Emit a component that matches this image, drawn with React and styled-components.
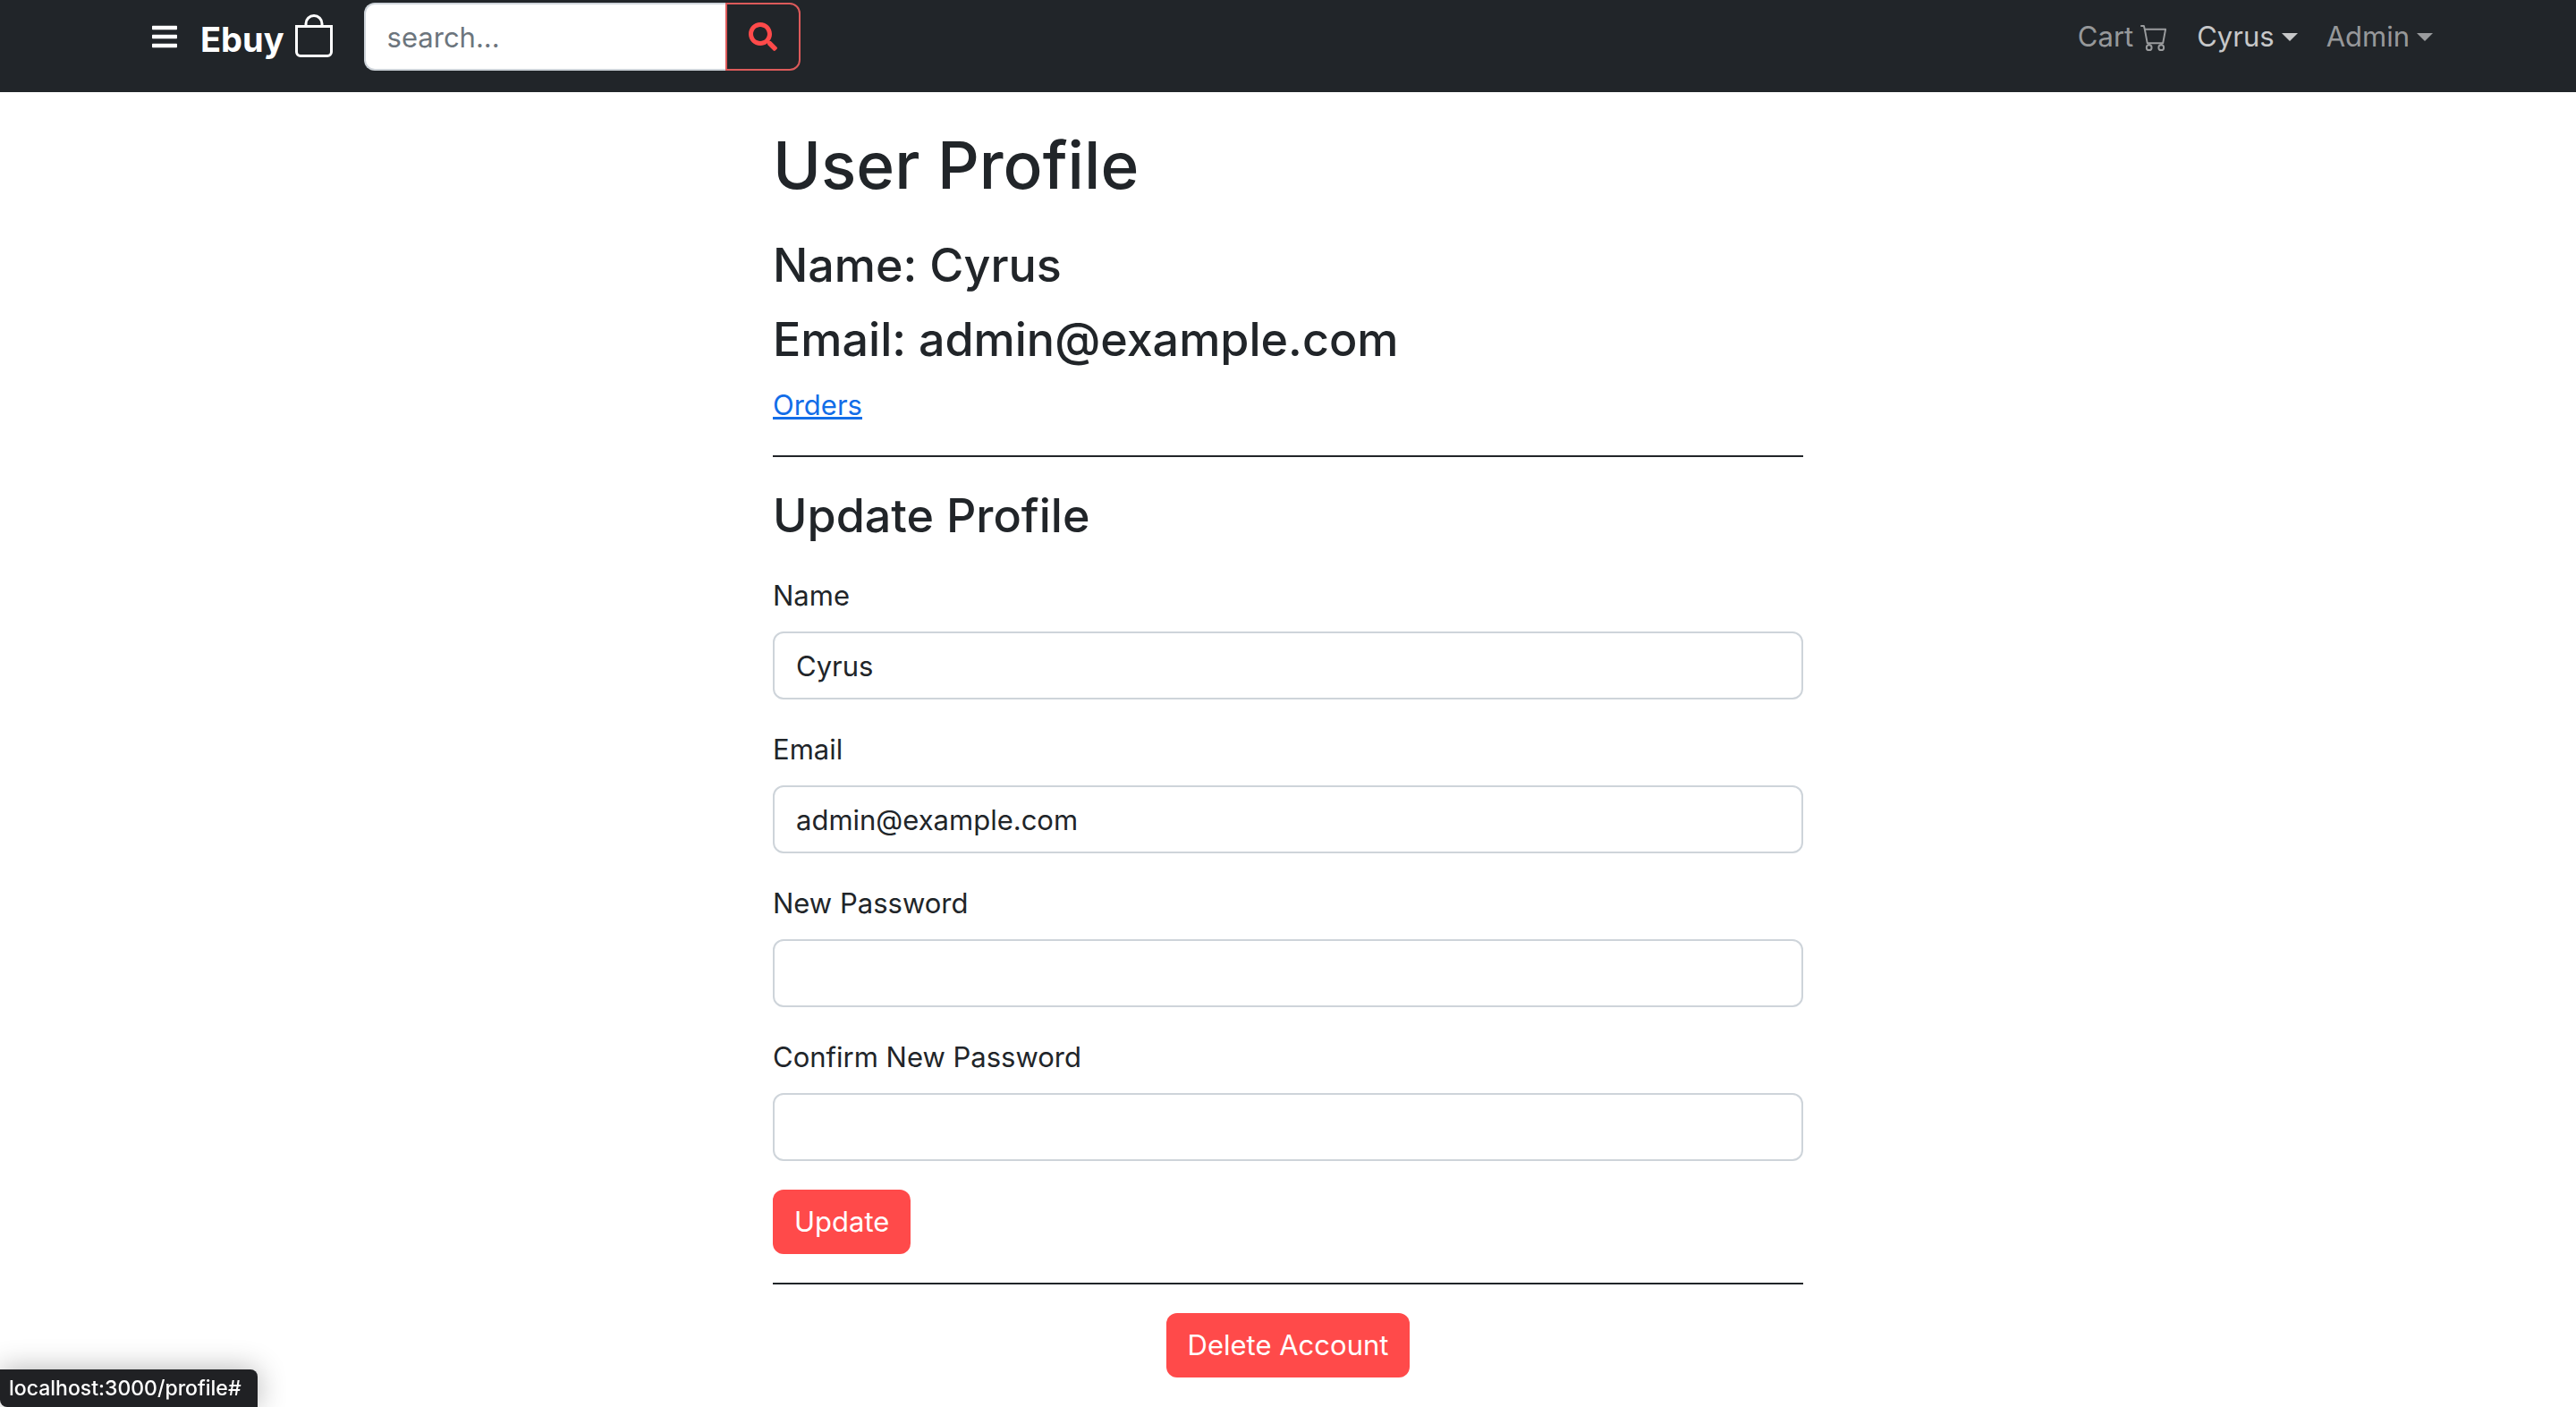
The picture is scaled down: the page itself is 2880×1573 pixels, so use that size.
import React, { useState } from "react";
import styled, { createGlobalStyle } from "styled-components";
import { FaBars, FaSearch } from "react-icons/fa";
import { BsBag, BsCart } from "react-icons/bs";

const GlobalStyle = createGlobalStyle`
  *, *::before, *::after { box-sizing: border-box; }
  body {
    margin: 0;
    background: #fff;
    color: #212529;
    font-family: Inter, "Liberation Sans", sans-serif;
    font-size: 31px;
    line-height: 48px;
  }
  button, input { font: inherit; }
`;

const Navbar = styled.header`
  background: #212529;
  padding: 3px 0 24px;
`;

const NavInner = styled.div`
  display: flex;
  align-items: center;
  max-width: 2640px;
  margin: 0 auto;
  padding: 0 24px;
`;

const MenuButton = styled.button`
  display: flex;
  padding: 16px 24px;
  border: 0;
  background: none;
  color: #fff;
  font-size: 32px;
`;

const Brand = styled.a`
  margin-right: 32px;
  color: #fff;
  font-size: 38px;
  font-weight: 700;
  line-height: 44px;
  text-decoration: none;
  white-space: nowrap;

  svg {
    margin-left: 9px;
    font-size: 48px;
    vertical-align: -6px;
  }
`;

const SearchForm = styled.form`
  display: flex;
`;

const SearchInput = styled.input`
  width: 406px;
  height: 76px;
  padding: 12px 24px;
  border: 2px solid #ced4da;
  border-right: 0;
  border-radius: 12px 0 0 12px;
  background: #fff;
  color: #212529;

  &::placeholder { color: #6c757d; opacity: 1; }
`;

const SearchButton = styled.button`
  display: flex;
  align-items: center;
  justify-content: center;
  width: 84px;
  margin-left: -2px;
  padding: 0;
  border: 2px solid #dc5a5a;
  border-radius: 0 12px 12px 0;
  background: #212529;
  color: #ff4a4a;
  font-size: 32px;
`;

const NavLinks = styled.nav`
  display: flex;
  margin-left: auto;
`;

const NavItem = styled.a`
  display: flex;
  align-items: center;
  gap: 8px;
  padding: 12px 16px;
  border: 0;
  background: none;
  color: rgba(255, 255, 255, ${(p) => (p.$active ? 0.75 : 0.55)});
  text-decoration: none;
`;

const Caret = styled.span`
  border-top: 9px solid;
  border-left: 9px solid transparent;
  border-right: 9px solid transparent;
`;

const Main = styled.main`
  max-width: 1152px;
  margin: 0 auto;
  padding: 34px 0 32px;
`;

const Title = styled.h1`
  margin: 0 0 30px;
  font-size: 73px;
  font-weight: 500;
  line-height: 96px;
`;

const Heading = styled.h3`
  margin: 0 0 ${(p) => (p.$spaced ? 32 : 16)}px;
  font-size: 52px;
  font-weight: 500;
  line-height: 67px;
`;

const OrdersLink = styled.a`
  color: #126de8;
  text-decoration: underline;
`;

const Divider = styled.hr`
  height: 2px;
  margin: 32px 0;
  border: 0;
  background: #212529;
`;

const Field = styled.div`
  margin-bottom: 32px;
`;

const Label = styled.label`
  display: block;
  margin-bottom: 16px;
`;

const TextInput = styled.input`
  display: block;
  width: 100%;
  height: 76px;
  padding: 12px 24px;
  border: 2px solid #ced4da;
  border-radius: 12px;
  background: #fff;
  color: #212529;
`;

const ActionButton = styled.button`
  display: block;
  padding: 12px 24px;
  border: 0;
  border-radius: 12px;
  background: #ff4a4a;
  color: #fff;
`;

const Center = styled.div`
  display: flex;
  justify-content: center;
`;

const StatusBubble = styled.div`
  position: fixed;
  left: 0;
  bottom: 0;
  padding: 0 18px 0 10px;
  border-radius: 0 8px 0 8px;
  background: #202124;
  box-shadow: 0 0 32px rgba(0, 0, 0, 0.3);
  color: #fff;
  font-size: 23px;
  font-weight: 500;
  line-height: 42px;
`;

const fields = [
  { id: "name", label: "Name", type: "text", value: "Cyrus" },
  { id: "email", label: "Email", type: "email", value: "admin@example.com" },
  { id: "password", label: "New Password", type: "password", value: "" },
  { id: "confirm", label: "Confirm New Password", type: "password", value: "" },
];

export default function App() {
  const [values, setValues] = useState(
    Object.fromEntries(fields.map((f) => [f.id, f.value]))
  );

  return (
    <>
      <GlobalStyle />
      <Navbar>
        <NavInner>
          <MenuButton type="button" aria-label="Menu">
            <FaBars />
          </MenuButton>
          <Brand href="#">
            Ebuy
            <BsBag />
          </Brand>
          <SearchForm onSubmit={(e) => e.preventDefault()}>
            <SearchInput type="text" placeholder="search..." aria-label="Search" />
            <SearchButton type="submit" aria-label="Submit search">
              <FaSearch />
            </SearchButton>
          </SearchForm>
          <NavLinks>
            <NavItem href="#">
              Cart
              <BsCart />
            </NavItem>
            <NavItem as="button" type="button" $active>
              Cyrus
              <Caret />
            </NavItem>
            <NavItem as="button" type="button">
              Admin
              <Caret />
            </NavItem>
          </NavLinks>
        </NavInner>
      </Navbar>
      <Main>
        <Title>User Profile</Title>
        <Heading as="h3">Name: {fields[0].value}</Heading>
        <Heading as="h3">Email: {fields[1].value}</Heading>
        <OrdersLink href="#">Orders</OrdersLink>
        <Divider />
        <Heading as="h3" $spaced>Update Profile</Heading>
        <form onSubmit={(e) => e.preventDefault()}>
          {fields.map((f) => (
            <Field key={f.id}>
              <Label htmlFor={f.id}>{f.label}</Label>
              <TextInput
                id={f.id}
                type={f.type}
                value={values[f.id]}
                onChange={(e) => setValues({ ...values, [f.id]: e.target.value })}
              />
            </Field>
          ))}
          <ActionButton type="submit">Update</ActionButton>
        </form>
        <Divider />
        <Center>
          <ActionButton type="button">Delete Account</ActionButton>
        </Center>
      </Main>
      <StatusBubble>localhost:3000/profile#</StatusBubble>
    </>
  );
}
